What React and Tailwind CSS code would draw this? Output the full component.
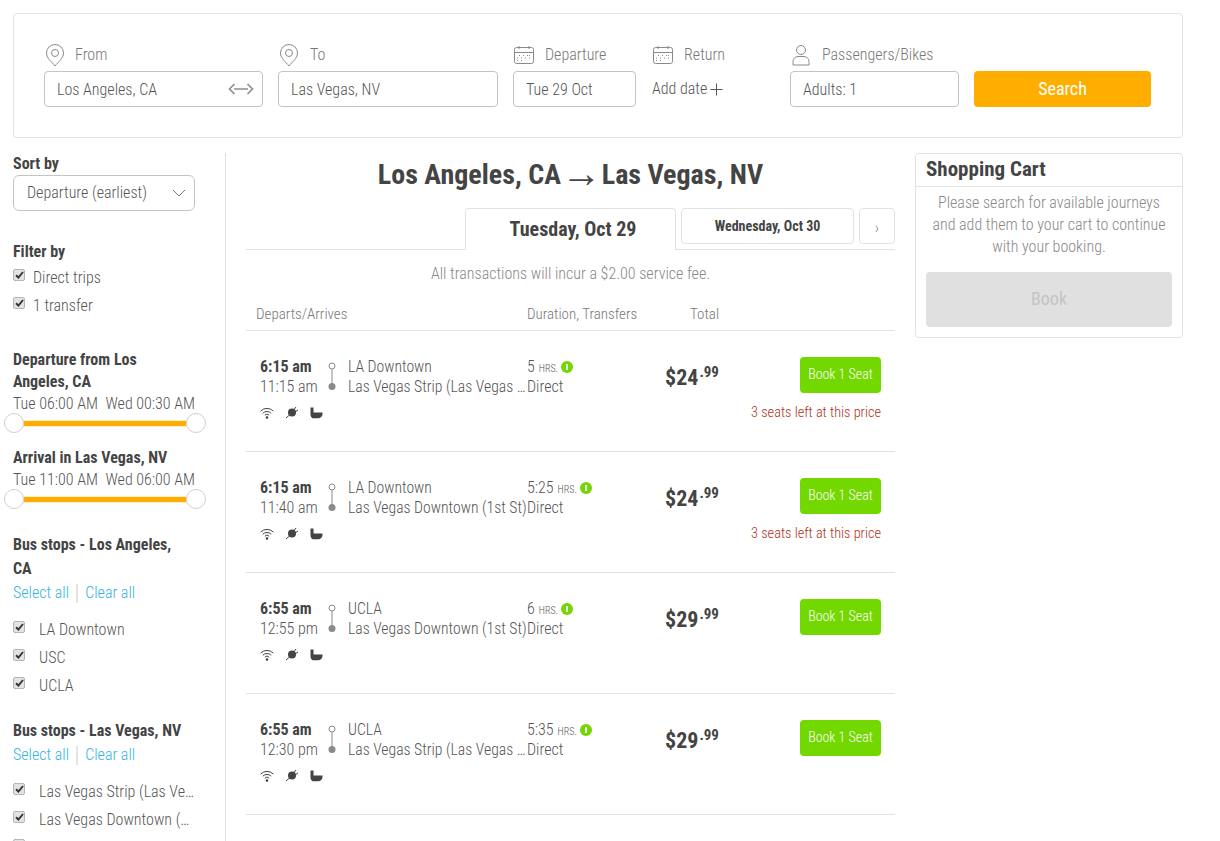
import React from "react";

const Pin = () => (
  <svg width="22" height="24" viewBox="0 0 22 24" fill="none" stroke="#8a8a8a" strokeWidth="1" className="shrink-0">
    <path d="M11 23 C8 19 2.5 15.5 2.5 10 A8.5 8.5 0 0 1 19.5 10 C19.5 15.5 14 19 11 23 Z" />
    <circle cx="11" cy="10" r="3.5" />
  </svg>
);
const Cal = () => (
  <svg width="22" height="20" viewBox="0 0 22 20" fill="none" stroke="#8a8a8a" strokeWidth="1" className="shrink-0">
    <rect x="1.5" y="2.5" width="19" height="16" rx="2" />
    <path d="M1.5 7.5H20.5M6 1V4M16 1V4" />
    <path d="M6 10.5H8M10 10.5H12M14 10.5H17M4 13H6M8 13H10M12 13H14M16 13H18M4 15.5H6M8 15.5H10" strokeDasharray="1 1" />
  </svg>
);
const Person = () => (
  <svg width="20" height="22" viewBox="0 0 20 22" fill="none" stroke="#8a8a8a" strokeWidth="1" className="shrink-0">
    <circle cx="10" cy="6" r="4.5" />
    <path d="M2 21V17.5C2 14.5 4.5 12.5 7 12.5H13C15.5 12.5 18 14.5 18 17.5V21Z" />
  </svg>
);
const Wifi = () => (
  <svg width="14" height="12" viewBox="0 0 14 12" fill="none" stroke="#444" strokeWidth="1">
    <path d="M0.7 4A9 9 0 0 1 13.3 4M2.8 6.2A6 6 0 0 1 11.2 6.2M4.8 8.2A3 3 0 0 1 9.2 8.2" />
    <circle cx="7" cy="10.5" r="1.2" fill="#333" stroke="none" />
  </svg>
);
const Plug = () => (
  <svg width="14" height="13" viewBox="0 0 14 13" fill="#444" stroke="#444">
    <circle cx="7" cy="6.5" r="4" stroke="none" />
    <path d="M1 12L4.5 9M9 3.5L11 1M10 6L13 4" strokeWidth="1" fill="none" />
  </svg>
);
const Toilet = () => (
  <svg width="13" height="12" viewBox="0 0 13 12" fill="#444">
    <path d="M0.5 0.5H3.5V5.5H12.5V7C12.5 9.5 10.5 11.2 8 11.2H2.5C1.2 10.5 0.5 9 0.5 7Z" />
  </svg>
);
const Check = ({ className = "" }) => (
  <span className={"flex h-3 w-3 shrink-0 items-center justify-center rounded-[2px] border border-[#b5b5b5] bg-[#e3e3e3] " + className}>
    <svg width="9" height="8" viewBox="0 0 9 8" fill="none" stroke="#333" strokeWidth="1.9"><path d="M1 4.2L3.4 6.5L8 1" /></svg>
  </span>
);
const Range = ({ a, b, className = "" }) => (
  <div className={className}>
    <div className="flex justify-between text-[16px] leading-[20px] text-[#555]"><span>{a}</span><span>{b}</span></div>
    <div className="relative -ml-[9px] -mt-[1px] h-5 w-[202px]">
      <div className="absolute left-[20px] right-[20px] top-[8px] h-[5px] bg-[#ffae00] outline outline-1 outline-[#ffeecb]" />
      <div className="absolute left-0 top-0 h-5 w-5 rounded-full border border-[#cfcfcf] bg-white" />
      <div className="absolute right-0 top-0 h-5 w-5 rounded-full border border-[#cfcfcf] bg-white" />
    </div>
  </div>
);
const Links = () => (
  <div className="mt-[2px] flex items-center text-[16px] leading-[20px] text-[#36b3de]">
    <span>Select all</span>
    <span className="mx-[7px] h-[19px] w-[2px] bg-[#e4e4e4]" />
    <span>Clear all</span>
  </div>
);
const Stop = ({ children }) => (
  <div className="flex h-[28px] items-center text-[16px] text-[#555]">
    <Check className="-mt-[6px]" />
    <span className="ml-[14px] w-[160px] truncate">{children}</span>
  </div>
);
const H = ({ children, className = "" }) => (
  <div className={"text-[16px] font-bold text-[#444] " + className}>{children}</div>
);

const Row = ({ dep, arr, from, to, dur, price, seats }) => (
  <div className="relative h-[121px] border-b border-[#e2e2e2] pl-[14px] pt-[26px]">
    <div className="flex">
      <div className="w-[68px] text-[16px] leading-[20px]">
        <div className="font-bold text-[#444]">{dep}</div>
        <div className="text-[#555]">{arr}</div>
      </div>
      <svg width="10" height="36" viewBox="0 0 10 36" className="-ml-[1px] mr-[11px] mt-[5px] shrink-0">
        <circle cx="5" cy="4" r="3" fill="#fff" stroke="#8a8a8a" />
        <path d="M5 7V24" stroke="#8a8a8a" />
        <circle cx="5" cy="24.5" r="3.5" fill="#8a8a8a" />
      </svg>
      <div className="-mr-[1px] w-[180px] text-[15.7px] leading-[20px] text-[#555]">
        <div>{from}</div>
        <div className="truncate">{to}</div>
      </div>
      <div className="text-[16px] leading-[20px] text-[#555]">
        <div className="flex items-center">
          <span>{dur}</span>
          <span className="ml-[4px] mt-[4px] text-[10px] leading-none">HRS.</span>
          <span className="ml-[3px] flex h-3 w-3 items-center justify-center rounded-full bg-[#73d700]"><span className="h-[6px] w-[2px] bg-white" /></span>
        </div>
        <div>Direct</div>
      </div>
    </div>
    <div className="mt-[8px] flex items-center gap-[11px]"><Wifi /><Plug /><Toilet /></div>
    <div className="absolute left-[419px] top-[32px] flex items-start font-bold text-[#444]">
      <span className="text-[22px] leading-[30px]">${price}</span>
      <span className="-mt-[3px] ml-[1px] text-[15px] leading-[24px]">.99</span>
    </div>
    <div className="absolute right-[14px] top-[26px] flex flex-col items-end">
      <div className="flex h-9 w-[81px] items-center justify-center rounded-[4px] bg-[#73d700] pb-[2px] text-[14px] text-white">Book 1 Seat</div>
      {seats && <div className="mt-[9px] text-[14.3px] leading-[20px] text-[#b03020]">3 seats left at this price</div>}
    </div>
  </div>
);

export default function App() {
  const field = "flex h-9 items-center rounded-[4px] border border-[#c4c4c4] pl-3 pt-[2px] text-[#555]";
  return (
    <div className="h-[841px] overflow-hidden bg-white p-[13px] pb-0 font-['Roboto_Condensed','Roboto',sans-serif] font-light [font-stretch:75%]">
      <div className="flex h-[125px] w-[1170px] items-end rounded-[4px] border border-[#e2e2e2] pb-[30px] pl-[30px] text-[16px]">
        <div className="w-[219px]">
          <div className="mb-[4px] flex h-[24px] items-center gap-[9px] text-[#777]"><Pin /><span>From</span></div>
          <div className="flex h-9 items-center justify-between rounded-[4px] border border-[#c4c4c4] pl-3 pr-[8px] pt-[2px] text-[#555]">
            <span>Los Angeles, CA</span>
            <svg width="26" height="12" viewBox="0 0 26 12" fill="none" stroke="#8f8f8f" strokeWidth="1.7" className="-mt-[2px]"><path d="M6.5 1L1.5 6L6.5 11M19.5 1L24.5 6L19.5 11M6 6H20" /></svg>
          </div>
        </div>
        <div className="ml-[15px] w-[220px]">
          <div className="mb-[4px] flex h-[24px] items-center gap-[10px] text-[#777]"><Pin /><span>To</span></div>
          <div className={field}>Las Vegas, NV</div>
        </div>
        <div className="ml-[15px] w-[123px]">
          <div className="mb-[4px] flex h-[24px] items-center gap-[10px] text-[#777]"><Cal /><span>Departure</span></div>
          <div className={field}>Tue 29 Oct</div>
        </div>
        <div className="ml-[16px] w-[138px]">
          <div className="mb-[4px] flex h-[24px] items-center gap-[10px] text-[#777]"><Cal /><span>Return</span></div>
          <div className="flex h-9 items-center text-[#555]">Add date
            <svg width="13" height="13" viewBox="0 0 13 13" stroke="#555" className="ml-[3px]"><path d="M6.5 0.5V12.5M0.5 6.5H12.5" /></svg>
          </div>
        </div>
        <div className="w-[169px]">
          <div className="mb-[4px] flex h-[24px] items-center gap-[11px] pl-[1px] text-[#777]"><Person /><span>Passengers/Bikes</span></div>
          <div className={field}>Adults: 1</div>
        </div>
        <div className="ml-[15px] flex h-9 w-[177px] items-center justify-center rounded-[4px] bg-[#ffae00] pb-[2px] text-[18px] font-normal text-white">Search</div>
      </div>

      <div className="mt-[15px] flex items-start">
        <aside className="h-[700px] w-[213px] shrink-0 border-r border-[#e2e2e2]">
          <div className="w-[182px]">
            <H className="leading-[22px]">Sort by</H>
            <div className="flex h-9 items-center justify-between rounded-[6px] border border-[#c4c4c4] pl-[13px] pr-[8px] text-[16px] text-[#555]">
              <span>Departure (earliest)</span>
              <svg width="14" height="8" viewBox="0 0 14 8" fill="none" stroke="#777"><path d="M1 1L7 7L13 1" /></svg>
            </div>
            <H className="mt-[29px] leading-[24px]">Filter by</H>
            <div className="flex h-[28px] items-center text-[16px] text-[#555]"><Check className="-mt-[6px]" /><span className="ml-[8px]">Direct trips</span></div>
            <div className="flex h-[28px] items-center text-[16px] text-[#555]"><Check className="-mt-[6px]" /><span className="ml-[8px]">1 transfer</span></div>
            <H className="mt-[29px] leading-[22px]">Departure from Los<br />Angeles, CA</H>
            <Range a="Tue 06:00 AM" b="Wed 00:30 AM" className="mt-[1px]" />
            <H className="mt-[13px] leading-[24px]">Arrival in Las Vegas, NV</H>
            <Range a="Tue 11:00 AM" b="Wed 06:00 AM" />
            <H className="mt-[24px] leading-[24px]">Bus stops - Los Angeles,<br />CA</H>
            <Links />
            <div className="mt-[13px]"><Stop>LA Downtown</Stop><Stop>USC</Stop><Stop>UCLA</Stop></div>
            <H className="mt-[19px] leading-[24px]">Bus stops - Las Vegas, NV</H>
            <Links />
            <div className="mt-[13px]"><Stop>Las Vegas Strip (Las Vegas Blvd)</Stop><Stop>Las Vegas Downtown (1st St)</Stop><Stop>UNLV</Stop></div>
          </div>
        </aside>

        <main className="ml-[20px] w-[649px] shrink-0">
          <h1 className="text-center text-[28px] font-bold leading-[44px] text-[#444]">Los Angeles, CA <span className="-mx-[6px] align-[-3px] text-[40px] font-light leading-[28px]">→</span> Las Vegas, NV</h1>
          <div className="mt-[11px] flex h-[42px] items-start justify-end border-b border-[#e2e2e2]">
            <div className="-mb-px flex h-[42px] w-[211px] items-center justify-center rounded-t-[4px] border border-b-0 border-[#e2e2e2] bg-white pb-[1px] pl-[5px] text-[20px] font-bold text-[#444]">Tuesday, Oct 29</div>
            <div className="ml-[5px] flex h-9 w-[173px] items-center justify-center rounded-[4px] border border-[#e2e2e2] text-[14px] font-bold text-[#444]">Wednesday, Oct 30</div>
            <div className="ml-[5px] flex h-9 w-9 items-center justify-center rounded-[4px] border border-[#e2e2e2] pt-[3px] text-[16px] text-[#888]">›</div>
          </div>
          <div className="mt-[14px] text-center text-[16px] leading-[20px] text-[#888]">All transactions will incur a $2.00 service fee.</div>
          <div className="relative mt-[20px] h-[27px] border-b border-[#e2e2e2] text-[15px] leading-[20px] text-[#777]">
            <span className="absolute left-[10px] top-0">Departs/Arrives</span>
            <span className="absolute left-[281px] top-0">Duration, Transfers</span>
            <span className="absolute left-[444px] top-0">Total</span>
          </div>
          <Row dep="6:15 am" arr="11:15 am" from="LA Downtown" to="Las Vegas Strip (Las Vegas Blvd)" dur="5" price="24" seats />
          <Row dep="6:15 am" arr="11:40 am" from="LA Downtown" to="Las Vegas Downtown (1st St)" dur="5:25" price="24" seats />
          <Row dep="6:55 am" arr="12:55 pm" from="UCLA" to="Las Vegas Downtown (1st St)" dur="6" price="29" />
          <Row dep="6:55 am" arr="12:30 pm" from="UCLA" to="Las Vegas Strip (Las Vegas Blvd)" dur="5:35" price="29" />
        </main>

        <section className="ml-[20px] h-[185px] w-[268px] shrink-0 rounded-[4px] border border-[#e2e2e2] px-[10px]">
          <div className="-mx-[10px] h-[33px] border-b border-[#e2e2e2] px-[10px] text-[21px] font-bold leading-[31px] text-[#444]">Shopping Cart</div>
          <p className="mt-[5px] text-center text-[16px] leading-[22px] text-[#888]">Please search for available journeys and add them to your cart to continue with your booking.</p>
          <div className="mt-[14px] flex h-[55px] items-center justify-center rounded-[4px] bg-[#e0e0e0] pb-[2px] text-[18px] font-normal text-[#c4c4c4]">Book</div>
        </section>
      </div>
    </div>
  );
}
